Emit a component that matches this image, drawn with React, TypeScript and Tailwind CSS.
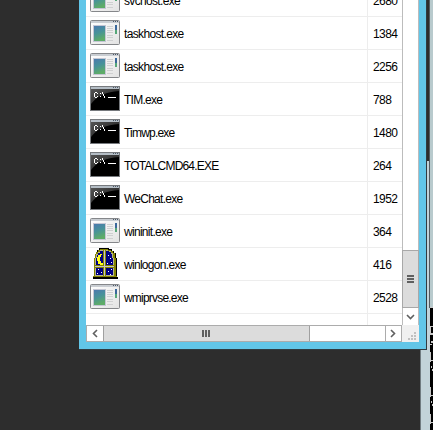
type Kind = 'app' | 'cmd' | 'moon';

const rows: { name: string; pid: string; icon: Kind; track: string }[] = [
  { name: 'svchost.exe', pid: '2680', icon: 'app', track: 'tracking-[-0.67px]' },
  { name: 'taskhost.exe', pid: '1384', icon: 'app', track: 'tracking-[-0.65px]' },
  { name: 'taskhost.exe', pid: '2256', icon: 'app', track: 'tracking-[-0.65px]' },
  { name: 'TIM.exe', pid: '788', icon: 'cmd', track: 'tracking-[-0.75px]' },
  { name: 'Timwp.exe', pid: '1480', icon: 'cmd', track: 'tracking-[-0.8px]' },
  { name: 'TOTALCMD64.EXE', pid: '264', icon: 'cmd', track: 'tracking-[-0.8px]' },
  { name: 'WeChat.exe', pid: '1952', icon: 'cmd', track: 'tracking-[-0.75px]' },
  { name: 'wininit.exe', pid: '364', icon: 'app', track: 'tracking-[-0.7px]' },
  { name: 'winlogon.exe', pid: '416', icon: 'moon', track: 'tracking-[-0.7px]' },
  { name: 'wmiprvse.exe', pid: '2528', icon: 'app', track: 'tracking-[-0.8px]' },
];

function AppIcon() {
  return (
    <svg width="32" height="32" viewBox="0 0 32 32" shapeRendering="crispEdges">
      <defs>
        <linearGradient id="pane" x1="0" y1="0" x2="0.3" y2="1">
          <stop offset="0" stopColor="#4b79ae" />
          <stop offset="0.5" stopColor="#47929a" />
          <stop offset="1" stopColor="#5eac68" />
        </linearGradient>
        <linearGradient id="face" x1="0" y1="0" x2="1" y2="1">
          <stop offset="0" stopColor="#fff" />
          <stop offset="1" stopColor="#e2e2e2" />
        </linearGradient>
      </defs>
      <rect x="1.5" y="3.5" width="29" height="24" rx="1" fill="url(#face)" stroke="#85878a" shapeRendering="auto" />
      <rect x="2" y="4" width="28" height="2" fill="#c9cdd2" />
      <path d="M24 4h1v1h-1zM26 4h1v1h-1zM28 4h1v1h-1z" fill="#4c5968" />
      <rect x="4" y="8" width="13" height="17" fill="#c4c6d4" />
      <rect x="5" y="9" width="11" height="15" fill="url(#pane)" />
      <path d="M18 9.500h6M18 11.500h6M18 13.500h6M18 15.500h6M18 18.500h6M18 20.500h6M18 23.500h6" stroke="#cfd0d1" />
      <rect x="26" y="8" width="2" height="5" fill="#3a689b" />
      <rect x="26" y="13" width="2" height="4" fill="#56a778" />
    </svg>
  );
}

function CmdIcon() {
  return (
    <svg width="32" height="32" viewBox="0 0 32 32" shapeRendering="crispEdges">
      <defs>
        <linearGradient id="shine" x1="0" y1="0" x2="1" y2="1">
          <stop offset="0" stopColor="#555" />
          <stop offset="1" stopColor="#151515" />
        </linearGradient>
      </defs>
      <rect x="1.500" y="3.500" width="29" height="24" fill="#000" stroke="#777a7e" />
      <rect x="2" y="4" width="28" height="2" fill="#b4bdc5" />
      <path d="M24 4h1v1h-1zM26 4h1v1h-1zM28 4h1v1h-1z" fill="#4c5968" />
      <path d="M2 6h28v2Q11 9 2 21z" fill="url(#shine)" shapeRendering="auto" />
      <path d="M6 9h2v1H6zM5 10h1v4H5zM6 14h2v1H6zM8 10h1v1H8zM8 13h1v1H8zM11 10h1v1h-1zM11 13h1v1h-1zM13 9h1v2h-1zM14 11h1v2h-1zM15 13h1v2h-1zM19 14h8v1h-8z" fill="#fff" />
    </svg>
  );
}

function MoonIcon() {
  return (
    <svg width="32" height="32" viewBox="0 0 32 32" shapeRendering="crispEdges">
      <g transform="translate(-1 0)">
        <path d="M11 0h10v1h3v2h2v2h2v5h1v19h1v2H5v-2h1V10h1V6h1V4h1V2h2z" fill="#000" />
        <path d="M12 1h8v1h3v1h2v2h2v5h1v19H6V10h1V6h1V4h2V2h2z" fill="#848400" />
        <path d="M12 2h8v1h3v2h2v5h1v18H7V10h1V6h2V4h2z" fill="#b5b58c" />
        <path d="M12 3h3v14H8V10h1V7h1V5h2zM18 3h3v1h2v2h1v4h1v7h-7zM8 20h7v7H8zM18 20h7v7h-7z" fill="#000080" />
        <path d="M15 2h3v26h-3zM7 17h19v3H7z" fill="#848400" />
        <path d="M16 2h1v26h-1zM7 18h19v1H7z" fill="#c6c6c6" />
        <path d="M12 6h2v1h-1v2h-1v4h1v2h2v2h-3v-1h-2v-3H9V9h1V7h2z" fill="#ffff21" />
        <path d="M20 7h1v1h-1zM22 10h1v1h-1zM23 14h1v1h-1zM19 15h1v1h-1zM10 21h1v1h-1zM13 24h1v1h-1zM9 25h1v1H9zM20 23h1v1h-1zM23 21h1v1h-1zM22 26h1v1h-1z" fill="#fff" />
        <rect x="5" y="28" width="24" height="1" fill="#848400" />
        <rect x="5" y="29" width="25" height="2" fill="#000" />
      </g>
    </svg>
  );
}

function ProcessIcon({ kind }: { kind: Kind }) {
  if (kind === 'cmd') return <CmdIcon />;
  if (kind === 'moon') return <MoonIcon />;
  return <AppIcon />;
}

function ProcessList() {
  return (
    <div className="h-[325px] w-[316px] overflow-hidden bg-white">
      <div className="-mt-[16px]">
        {rows.map((r, i) => (
          <div key={i} className="flex h-[33px] border-b border-[#ededed]">
            <div className="flex w-[282px] shrink-0 items-center border-r border-[#ededed] pl-[3px]">
              <ProcessIcon kind={r.icon} />
              <span className={'ml-[3px] mt-px whitespace-pre ' + r.track}>{r.name}</span>
            </div>
            <span className="ml-[5px] mt-[10px] tracking-[-0.6px]">{r.pid}</span>
          </div>
        ))}
        <div className="h-[12px] w-[282px] border-r border-[#ededed]" />
      </div>
    </div>
  );
}

function VerticalBar() {
  return (
    <div className="flex h-[325px] w-[17px] flex-col border-x border-[#bcbcbc] bg-white">
      <div className="h-[250px]" />
      <div className="-mx-px flex h-[58px] flex-col items-center justify-center gap-[1px] border border-[#a8a8a8] bg-[#dcdcdc]">
        <i className="h-[2px] w-[7px] bg-[#606060]" />
        <i className="h-[2px] w-[7px] bg-[#606060]" />
        <i className="h-[2px] w-[7px] bg-[#606060]" />
      </div>
      <div className="flex grow items-center justify-center">
        <svg width="9" height="6" viewBox="0 0 9 6"><path d="M1 1l3.500 3.500L8 1" fill="none" stroke="#606060" strokeWidth="1.600" /></svg>
      </div>
    </div>
  );
}

function HorizontalBar() {
  return (
    <div className="flex h-[17px] w-[333px] bg-[#f0f0f0]">
      <div className="flex w-[316px] border border-[#acacac] bg-white">
        <div className="flex w-[16px] items-center justify-center pr-px">
          <svg width="6" height="9" viewBox="0 0 6 9"><path d="M5 1L1.500 4.500L5 8" fill="none" stroke="#606060" strokeWidth="1.600" /></svg>
        </div>
        <div className="flex w-[207px] items-center justify-center gap-[1px] border-x border-[#a0a0a0] bg-[#dcdcdc] pr-[2px]">
          <i className="h-[7px] w-[2px] bg-[#606060]" />
          <i className="h-[7px] w-[2px] bg-[#606060]" />
          <i className="h-[7px] w-[2px] bg-[#606060]" />
        </div>
        <div className="grow" />
        <div className="flex w-[16px] items-center justify-center border-l border-[#acacac] pr-px">
          <svg width="6" height="9" viewBox="0 0 6 9"><path d="M1 1l3.500 3.500L1 8" fill="none" stroke="#606060" strokeWidth="1.600" /></svg>
        </div>
      </div>
      <svg width="16" height="17" viewBox="0 0 16 17" shapeRendering="crispEdges">
        <path d="M12 7h2v2h-2zM12 10h2v2h-2zM9 10h2v2H9zM12 13h2v2h-2zM9 13h2v2H9zM6 13h2v2H6z" fill="#c0c0c0" />
      </svg>
    </div>
  );
}

export default function App() {
  return (
    <div className="relative h-[430px] w-full overflow-hidden bg-[#2d2d2d] font-['Liberation_Sans',sans-serif] text-[12px] leading-[14px] text-black">
      {/* window behind, showing only its left frame */}
      <div className="absolute left-[420px] top-[161px] flex h-[269px] w-[13px] border-l border-[#707b80] bg-[#c2d3d9]" />
      <div className="absolute left-[429px] top-0 h-[308px] w-[4px] border-l border-[#515b60] bg-[#b8cacd]" />
      <svg className="absolute left-[430px] top-[307px]" width="3" height="123" shapeRendering="crispEdges">
        <rect width="3" height="123" fill="#000" />
        <path d="M0 0h3v1H0zM0 19h1v9H0zM1 19h2v1H1zM1 26h2v2H1zM1 34h2v2H1zM0 37h2v1H0zM0 45h1v10H0zM1 53h2v1H1zM1 59h1v2H1zM2 62h1v2H2zM0 80h1v10H0zM1 88h2v1H1zM1 94h1v2H1zM2 97h1v2H2zM0 107h1v10H0zM1 115h2v1H1z" fill="#c8c8c8" />
      </svg>
      {/* process manager window */}
      <div className="absolute left-[79px] top-0 flex h-[350px] w-[348px] flex-col border-b border-r border-[#303b40] bg-[#62c6e8] pl-[7px]">
        <div className="flex">
          <ProcessList />
          <VerticalBar />
        </div>
        <HorizontalBar />
      </div>
    </div>
  );
}
